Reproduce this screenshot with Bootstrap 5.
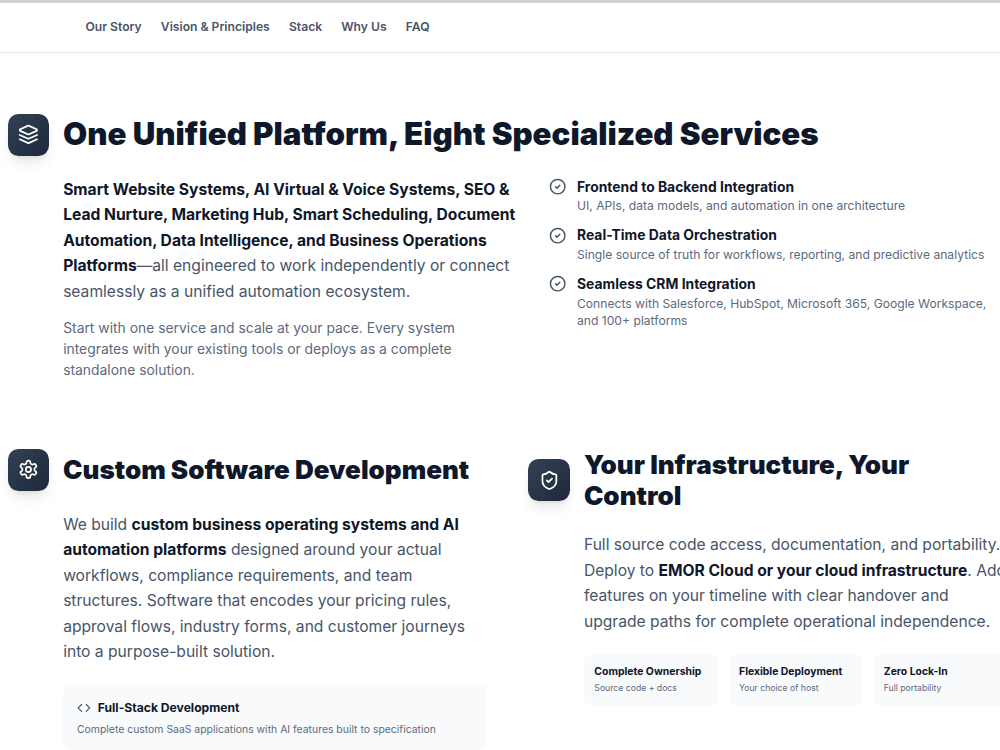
<!DOCTYPE html>
<html lang="en">

<head>
    <meta charset="UTF-8">
    <meta name="viewport" content="width=device-width, initial-scale=1.0">
    <title>Our Services</title>
    <link href="https://cdn.jsdelivr.net/npm/bootstrap@5.3.2/dist/css/bootstrap.min.css" rel="stylesheet">
    <style>
        html {
            font-size: 13.885px;
        }

        body {
            font-family: Inter, "Liberation Sans", sans-serif;
            color: #0f172a;
            overflow-x: hidden;
        }

        .site-nav {
            height: 53px;
            border-top: 3px solid #d0d3d6;
            border-bottom: 1px solid #e2e8f0;
            padding: 0 0 1px 85.5px;
            gap: 1.38rem;
        }

        .site-nav a {
            font-size: .875rem;
            font-weight: 600;
            color: #475569;
            text-decoration: none;
        }

        .page-wrap {
            width: 1000px;
            margin-left: 7.6px;
            padding-top: 61px;
        }

        .icon-tile {
            width: 3rem;
            height: 3rem;
            border-radius: .75rem;
            background: linear-gradient(135deg, #334155, #1e293b);
            box-shadow: 0 9px 13px -3px rgba(0, 0, 0, .1), 0 3px 5px -3px rgba(0, 0, 0, .1);
            color: #fff;
        }

        .icon-tile svg {
            width: 1.5rem;
            height: 1.5rem;
        }

        svg {
            fill: none;
            stroke: currentColor;
            stroke-width: 2;
            stroke-linecap: round;
            stroke-linejoin: round;
            flex-shrink: 0;
        }

        h2,
        h3 {
            font-weight: 900;
            margin: 0;
        }

        h2 {
            font-size: 2.25rem;
            line-height: 2.5rem;
        }

        h3 {
            font-size: 1.875rem;
            line-height: 2.25rem;
        }

        .section-body {
            padding-left: 4rem;
        }

        .intro {
            font-size: 1.125rem;
            line-height: 25.5px;
            color: #475569;
            white-space: nowrap;
            margin: 0;
        }

        .intro strong {
            font-weight: 700;
            color: #0f172a;
        }

        .note {
            line-height: 1.5rem;
            color: #5c6a7e;
            white-space: nowrap;
            margin: 0;
        }

        .top-grid {
            display: grid;
            grid-template-columns: 1fr 1fr;
            gap: 2rem;
            margin-top: 21px;
        }

        .top-grid .feature-list {
            gap: .75rem;
        }

        .feature-list svg {
            width: 1.25rem;
            height: 1.25rem;
            margin-top: 1.5px;
            margin-right: .75rem;
            color: #475569;
        }

        .feature-title {
            font-weight: 700;
            line-height: 1.5rem;
        }

        .feature-text {
            font-size: .875rem;
            line-height: 1.25rem;
            color: #5c6a7e;
            white-space: nowrap;
        }

        .bottom-grid {
            display: grid;
            grid-template-columns: 1fr 1fr;
            gap: 3rem;
            margin-top: 68.5px;
        }

        .bottom-grid .intro {
            margin-top: 21px;
        }

        .soft-box {
            background: #f8fafc;
            border-radius: .6rem;
        }

        .stack-box {
            margin-top: 20.5px;
            padding: 1rem;
            height: 65px;
        }

        .stack-box svg {
            width: 1rem;
            height: 1rem;
            color: #475569;
        }

        .stack-title {
            font-size: .875rem;
            line-height: 1.25rem;
            font-weight: 700;
        }

        .stack-text {
            font-size: .75rem;
            line-height: 1rem;
            margin-top: .45rem;
            color: #5c6a7e;
        }

        .perks {
            display: grid;
            grid-template-columns: repeat(3, 1fr);
            gap: .75rem;
            margin-top: 20px;
        }

        .perk {
            padding: .75rem;
            height: 51.5px;
            white-space: nowrap;
        }

        .perk-title {
            font-size: .75rem;
            line-height: 1rem;
            font-weight: 700;
        }

        .perk-text {
            font-size: .625rem;
            line-height: 1rem;
            margin-top: .25rem;
            color: #5c6a7e;
        }
    </style>
</head>

<body>
    <nav class="site-nav d-flex align-items-center">
        <a href="#">Our Story</a>
        <a href="#">Vision &amp; Principles</a>
        <a href="#">Stack</a>
        <a href="#">Why Us</a>
        <a href="#">FAQ</a>
    </nav>

    <main class="page-wrap">
        <section>
            <div class="d-flex align-items-center gap-3">
                <div class="icon-tile d-flex align-items-center justify-content-center flex-shrink-0">
                    <svg viewBox="0 0 24 24"><path d="m12.83 2.18a2 2 0 0 0-1.66 0L2.6 6.08a1 1 0 0 0 0 1.83l8.58 3.91a2 2 0 0 0 1.66 0l8.58-3.9a1 1 0 0 0 0-1.83Z"/><path d="m22 12.65-9.17 4.16a2 2 0 0 1-1.66 0L2 12.65"/><path d="m22 17.65-9.17 4.16a2 2 0 0 1-1.66 0L2 17.65"/></svg>
                </div>
                <h2>One Unified Platform, Eight Specialized Services</h2>
            </div>
            <div class="section-body top-grid">
                <div>
                    <p class="intro"><strong>Smart Website Systems, AI Virtual &amp; Voice Systems, SEO &amp;<br>Lead Nurture, Marketing Hub, Smart Scheduling, Document<br>Automation, Data Intelligence, and Business Operations<br>Platforms</strong>—all engineered to work independently or connect<br>seamlessly as a unified automation ecosystem.</p>
                    <p class="note mt-3">Start with one service and scale at your pace. Every system<br>integrates with your existing tools or deploys as a complete<br>standalone solution.</p>
                </div>
                <div class="feature-list d-flex flex-column">
                    <div class="d-flex">
                        <svg viewBox="0 0 24 24"><circle cx="12" cy="12" r="10"/><path d="m9 12 2 2 4-4"/></svg>
                        <div>
                            <div class="feature-title">Frontend to Backend Integration</div>
                            <div class="feature-text">UI, APIs, data models, and automation in one architecture</div>
                        </div>
                    </div>
                    <div class="d-flex">
                        <svg viewBox="0 0 24 24"><circle cx="12" cy="12" r="10"/><path d="m9 12 2 2 4-4"/></svg>
                        <div>
                            <div class="feature-title">Real-Time Data Orchestration</div>
                            <div class="feature-text">Single source of truth for workflows, reporting, and predictive analytics</div>
                        </div>
                    </div>
                    <div class="d-flex">
                        <svg viewBox="0 0 24 24"><circle cx="12" cy="12" r="10"/><path d="m9 12 2 2 4-4"/></svg>
                        <div>
                            <div class="feature-title">Seamless CRM Integration</div>
                            <div class="feature-text">Connects with Salesforce, HubSpot, Microsoft 365, Google Workspace,<br>and 100+ platforms</div>
                        </div>
                    </div>
                </div>
            </div>
        </section>

        <div class="bottom-grid">
            <section>
                <div class="d-flex align-items-center gap-3">
                    <div class="icon-tile d-flex align-items-center justify-content-center flex-shrink-0">
                        <svg viewBox="0 0 24 24"><path d="M12.22 2h-.44a2 2 0 0 0-2 2v.18a2 2 0 0 1-1 1.73l-.43.25a2 2 0 0 1-2 0l-.15-.08a2 2 0 0 0-2.73.73l-.22.38a2 2 0 0 0 .73 2.73l.15.1a2 2 0 0 1 1 1.72v.51a2 2 0 0 1-1 1.74l-.15.09a2 2 0 0 0-.73 2.73l.22.38a2 2 0 0 0 2.73.73l.15-.08a2 2 0 0 1 2 0l.43.25a2 2 0 0 1 1 1.73V20a2 2 0 0 0 2 2h.44a2 2 0 0 0 2-2v-.18a2 2 0 0 1 1-1.73l.43-.25a2 2 0 0 1 2 0l.15.08a2 2 0 0 0 2.73-.73l.22-.39a2 2 0 0 0-.73-2.73l-.15-.08a2 2 0 0 1-1-1.74v-.5a2 2 0 0 1 1-1.74l.15-.09a2 2 0 0 0 .73-2.73l-.22-.38a2 2 0 0 0-2.73-.73l-.15.08a2 2 0 0 1-2 0l-.43-.25a2 2 0 0 1-1-1.73V4a2 2 0 0 0-2-2z"/><circle cx="12" cy="12" r="3"/></svg>
                    </div>
                    <h3>Custom Software Development</h3>
                </div>
                <div class="section-body">
                    <p class="intro">We build <strong>custom business operating systems and AI<br>automation platforms</strong> designed around your actual<br>workflows, compliance requirements, and team<br>structures. Software that encodes your pricing rules,<br>approval flows, industry forms, and customer journeys<br>into a purpose-built solution.</p>
                    <div class="soft-box stack-box">
                        <div class="d-flex align-items-center gap-2">
                            <svg viewBox="0 0 24 24"><path d="m16 18 6-6-6-6"/><path d="m8 6-6 6 6 6"/></svg>
                            <span class="stack-title">Full-Stack Development</span>
                        </div>
                        <div class="stack-text">Complete custom SaaS applications with AI features built to specification</div>
                    </div>
                </div>
            </section>
            <section>
                <div class="d-flex align-items-center gap-3">
                    <div class="icon-tile d-flex align-items-center justify-content-center flex-shrink-0">
                        <svg viewBox="0 0 24 24"><path d="M20 13c0 5-3.5 7.5-7.66 8.95a1 1 0 0 1-.67-.01C7.5 20.5 4 18 4 13V6a1 1 0 0 1 1-1c2 0 4.5-1.2 6.24-2.72a1.17 1.17 0 0 1 1.52 0C14.51 3.81 17 5 19 5a1 1 0 0 1 1 1z"/><path d="m9 12 2 2 4-4"/></svg>
                    </div>
                    <h3>Your Infrastructure, Your<br>Control</h3>
                </div>
                <div class="section-body">
                    <p class="intro">Full source code access, documentation, and portability.<br>Deploy to <strong>EMOR Cloud or your cloud infrastructure</strong>. Add<br>features on your timeline with clear handover and<br>upgrade paths for complete operational independence.</p>
                    <div class="perks">
                        <div class="soft-box perk">
                            <div class="perk-title">Complete Ownership</div>
                            <div class="perk-text">Source code + docs</div>
                        </div>
                        <div class="soft-box perk">
                            <div class="perk-title">Flexible Deployment</div>
                            <div class="perk-text">Your choice of host</div>
                        </div>
                        <div class="soft-box perk">
                            <div class="perk-title">Zero Lock-In</div>
                            <div class="perk-text">Full portability</div>
                        </div>
                    </div>
                </div>
            </section>
        </div>
    </main>
    <script src="https://cdn.jsdelivr.net/npm/bootstrap@5.3.2/dist/js/bootstrap.bundle.min.js"></script>
</body>

</html>
